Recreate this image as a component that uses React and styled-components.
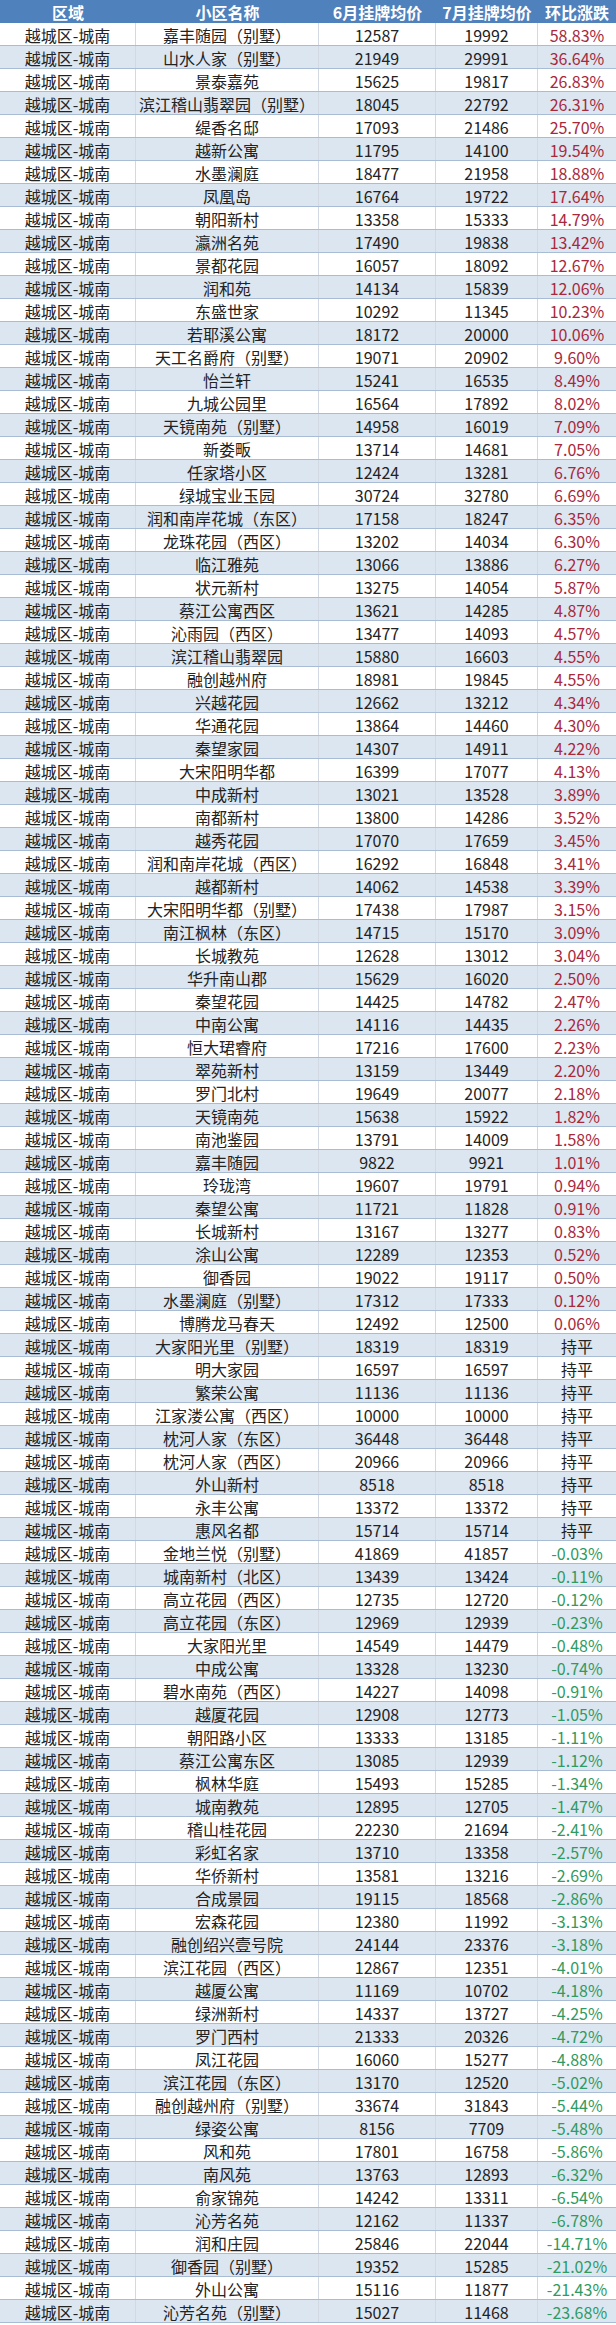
import React from "react";
import styled, { createGlobalStyle } from "styled-components";

const Global = createGlobalStyle`
  html, body { margin: 0; padding: 0; background: #ffffff; }
  body { font-family: "Noto Sans CJK SC", "Noto Sans", sans-serif; }
`;

const rows = `嘉丰随园（别墅）|12587|19992|58.83%
山水人家（别墅）|21949|29991|36.64%
景泰嘉苑|15625|19817|26.83%
滨江稽山翡翠园（别墅）|18045|22792|26.31%
缇香名邸|17093|21486|25.70%
越新公寓|11795|14100|19.54%
水墨澜庭|18477|21958|18.88%
凤凰岛|16764|19722|17.64%
朝阳新村|13358|15333|14.79%
瀛洲名苑|17490|19838|13.42%
景都花园|16057|18092|12.67%
润和苑|14134|15839|12.06%
东盛世家|10292|11345|10.23%
若耶溪公寓|18172|20000|10.06%
天工名爵府（别墅）|19071|20902|9.60%
怡兰轩|15241|16535|8.49%
九城公园里|16564|17892|8.02%
天镜南苑（别墅）|14958|16019|7.09%
新娄畈|13714|14681|7.05%
任家塔小区|12424|13281|6.76%
绿城宝业玉园|30724|32780|6.69%
润和南岸花城（东区）|17158|18247|6.35%
龙珠花园（西区）|13202|14034|6.30%
临江雅苑|13066|13886|6.27%
状元新村|13275|14054|5.87%
蔡江公寓西区|13621|14285|4.87%
沁雨园（西区）|13477|14093|4.57%
滨江稽山翡翠园|15880|16603|4.55%
融创越州府|18981|19845|4.55%
兴越花园|12662|13212|4.34%
华通花园|13864|14460|4.30%
秦望家园|14307|14911|4.22%
大宋阳明华都|16399|17077|4.13%
中成新村|13021|13528|3.89%
南都新村|13800|14286|3.52%
越秀花园|17070|17659|3.45%
润和南岸花城（西区）|16292|16848|3.41%
越都新村|14062|14538|3.39%
大宋阳明华都（别墅）|17438|17987|3.15%
南江枫林（东区）|14715|15170|3.09%
长城教苑|12628|13012|3.04%
华升南山郡|15629|16020|2.50%
秦望花园|14425|14782|2.47%
中南公寓|14116|14435|2.26%
恒大珺睿府|17216|17600|2.23%
翠苑新村|13159|13449|2.20%
罗门北村|19649|20077|2.18%
天镜南苑|15638|15922|1.82%
南池鉴园|13791|14009|1.58%
嘉丰随园|9822|9921|1.01%
玲珑湾|19607|19791|0.94%
秦望公寓|11721|11828|0.91%
长城新村|13167|13277|0.83%
涂山公寓|12289|12353|0.52%
御香园|19022|19117|0.50%
水墨澜庭（别墅）|17312|17333|0.12%
博腾龙马春天|12492|12500|0.06%
大家阳光里（别墅）|18319|18319|持平
明大家园|16597|16597|持平
繁荣公寓|11136|11136|持平
江家溇公寓（西区）|10000|10000|持平
枕河人家（东区）|36448|36448|持平
枕河人家（西区）|20966|20966|持平
外山新村|8518|8518|持平
永丰公寓|13372|13372|持平
惠风名都|15714|15714|持平
金地兰悦（别墅）|41869|41857|-0.03%
城南新村（北区）|13439|13424|-0.11%
高立花园（西区）|12735|12720|-0.12%
高立花园（东区）|12969|12939|-0.23%
大家阳光里|14549|14479|-0.48%
中成公寓|13328|13230|-0.74%
碧水南苑（西区）|14227|14098|-0.91%
越厦花园|12908|12773|-1.05%
朝阳路小区|13333|13185|-1.11%
蔡江公寓东区|13085|12939|-1.12%
枫林华庭|15493|15285|-1.34%
城南教苑|12895|12705|-1.47%
稽山桂花园|22230|21694|-2.41%
彩虹名家|13710|13358|-2.57%
华侨新村|13581|13216|-2.69%
合成景园|19115|18568|-2.86%
宏森花园|12380|11992|-3.13%
融创绍兴壹号院|24144|23376|-3.18%
滨江花园（西区）|12867|12351|-4.01%
越厦公寓|11169|10702|-4.18%
绿洲新村|14337|13727|-4.25%
罗门西村|21333|20326|-4.72%
凤江花园|16060|15277|-4.88%
滨江花园（东区）|13170|12520|-5.02%
融创越州府（别墅）|33674|31843|-5.44%
绿姿公寓|8156|7709|-5.48%
风和苑|17801|16758|-5.86%
南风苑|13763|12893|-6.32%
俞家锦苑|14242|13311|-6.54%
沁芳名苑|12162|11337|-6.78%
润和庄园|25846|22044|-14.71%
御香园（别墅）|19352|15285|-21.02%
外山公寓|15116|11877|-21.43%
沁芳名苑（别墅）|15027|11468|-23.68%`
  .split("\n")
  .map((l) => l.split("|"));

const COLS = "136px 183px 117px 102px 78px";

const Table = styled.div`
  width: 616px;
  box-sizing: border-box;
  border-left: 1px solid #a9bcd6;
  border-right: 1px solid #a9bcd6;
  font-family: "Noto Sans CJK SC", "Noto Sans", sans-serif;
`;

const HeaderRow = styled.div`
  display: grid;
  grid-template-columns: ${COLS};
  height: 23px;
  background: #4f81bd;
  margin-left: -1px;
  margin-right: -1px;
`;

const HeadCell = styled.div`
  display: flex;
  align-items: center;
  justify-content: center;
  color: #ffffff;
  font-weight: 700;
  font-size: 16px;
  line-height: 1;
  white-space: nowrap;
`;

const Row = styled.div`
  display: grid;
  grid-template-columns: ${COLS};
  height: 23px;
  box-sizing: border-box;
  border-bottom: 1px solid #a9bcd6;
  background: ${(p) => (p.$alt ? "#dce6f1" : "#ffffff")};
  margin-left: -1px;
  margin-right: -1px;
`;

const Cell = styled.div`
  display: flex;
  align-items: center;
  justify-content: center;
  font-size: 16px;
  line-height: 1;
  white-space: nowrap;
  color: ${(p) => p.$color || "#222222"};
  box-sizing: border-box;
  border-right: ${(p) => (p.$last ? "none" : "1px solid #d3d9e2")};
  padding-top: 1px;
`;

function changeColor(v) {
  if (v === "持平") return "#222222";
  if (v.startsWith("-")) return "#2f9a62";
  return "#a8283c";
}

export default function App() {
  return (
    <>
      <Global />
      <Table>
        <HeaderRow>
          <HeadCell>区域</HeadCell>
          <HeadCell>小区名称</HeadCell>
          <HeadCell>6月挂牌均价</HeadCell>
          <HeadCell>7月挂牌均价</HeadCell>
          <HeadCell>环比涨跌</HeadCell>
        </HeaderRow>
        {rows.map(([name, jun, jul, chg], i) => (
          <Row key={i} $alt={i % 2 === 1}>
            <Cell>越城区-城南</Cell>
            <Cell>{name}</Cell>
            <Cell>{jun}</Cell>
            <Cell>{jul}</Cell>
            <Cell $last $color={changeColor(chg)}>{chg}</Cell>
          </Row>
        ))}
      </Table>
    </>
  );
}
